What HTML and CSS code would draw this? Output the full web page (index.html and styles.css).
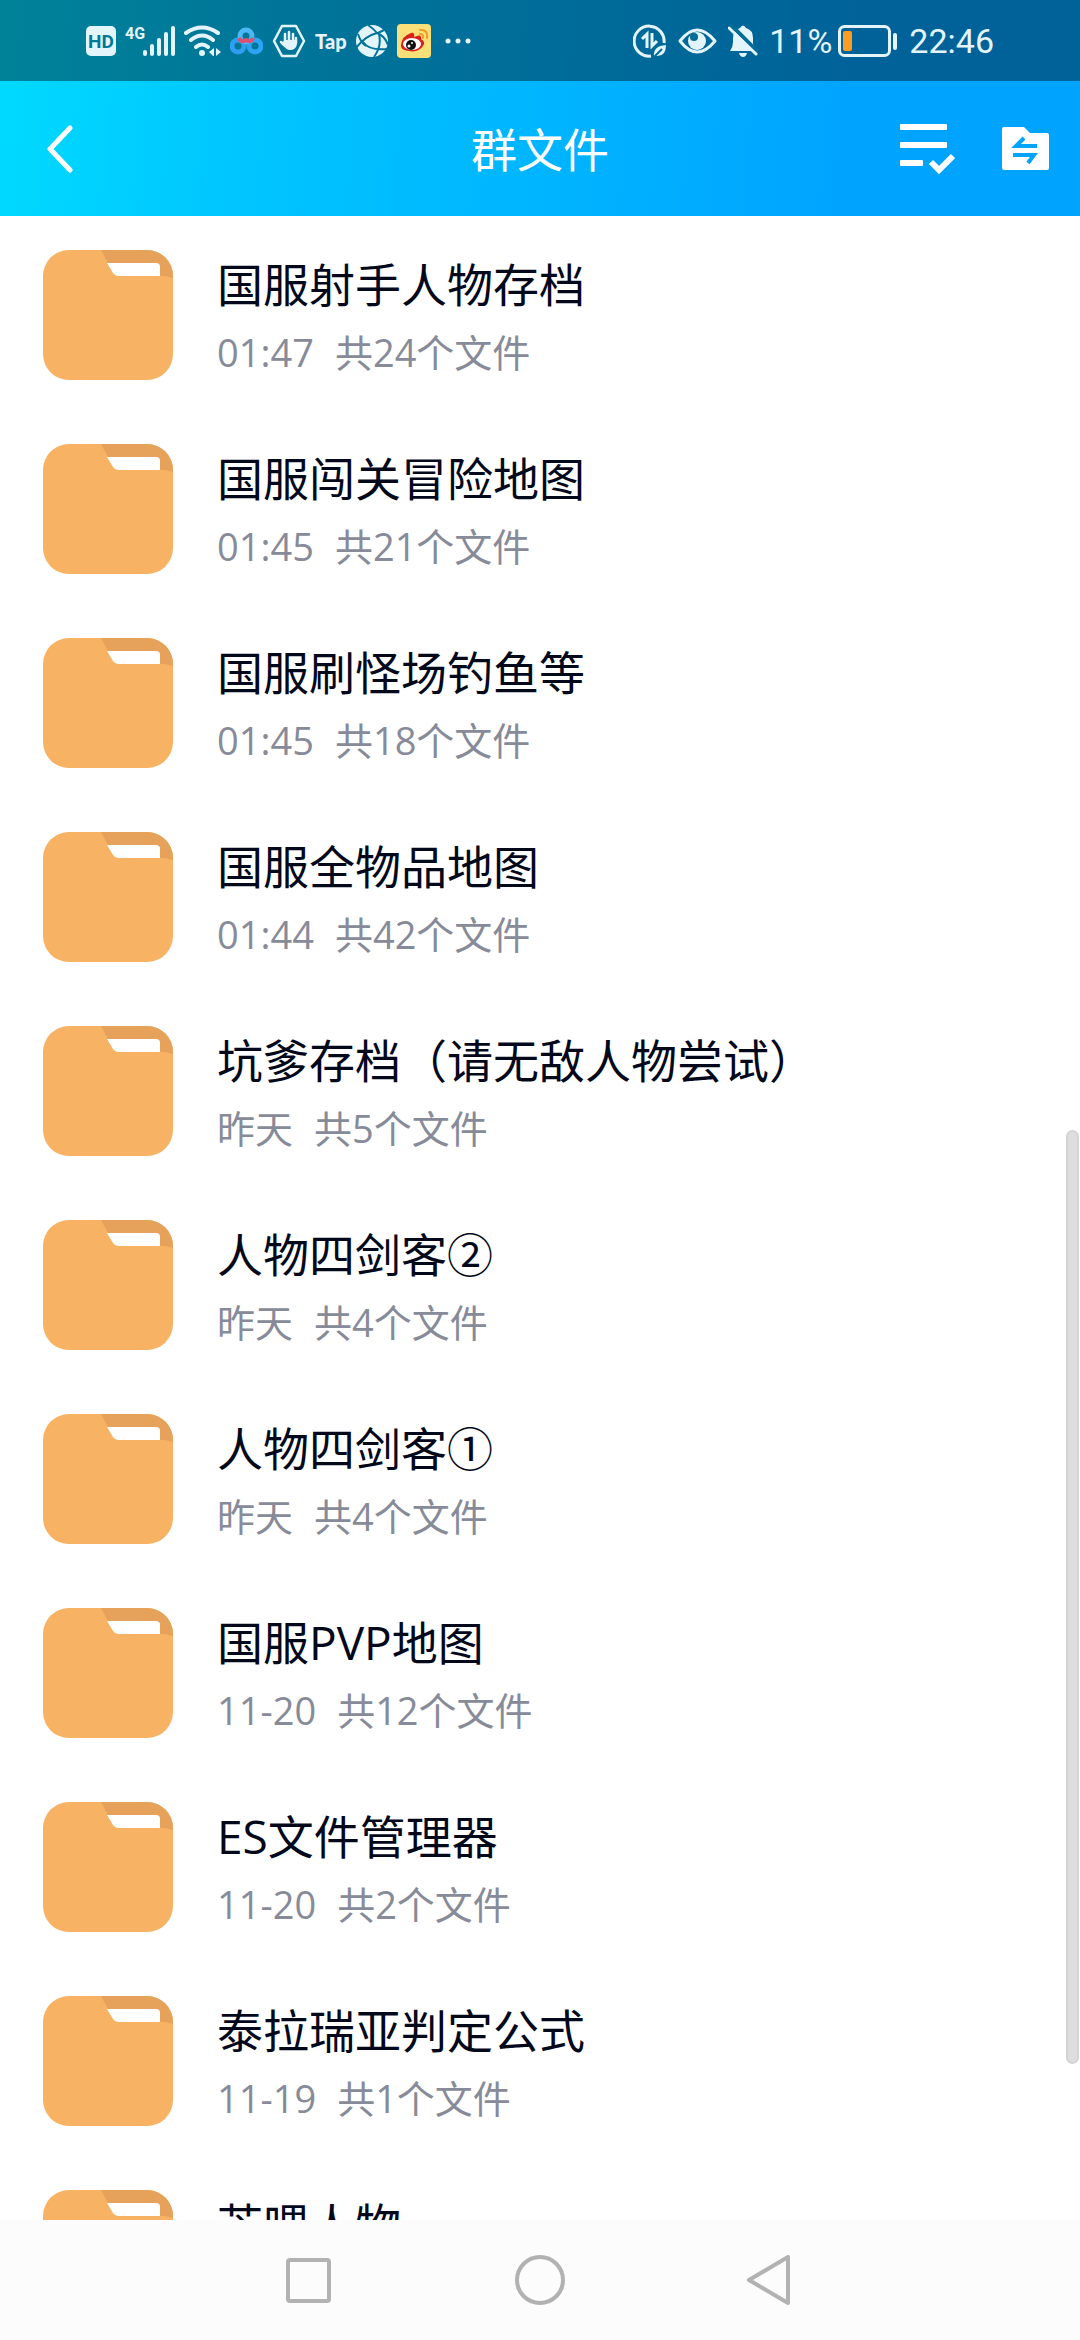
FILE: index.html
```html
<!DOCTYPE html>
<html lang="zh-CN">
<head>
<meta charset="utf-8">
<meta name="viewport" content="width=device-width, initial-scale=1">
<title>群文件</title>
<link rel="stylesheet" href="styles.css">
</head>
<body>
<svg class="defs" width="0" height="0" aria-hidden="true">
  <symbol id="folder" viewBox="0 0 130 130">
    <rect width="130" height="130" rx="26" fill="#f7b264"/>
    <path d="M58 0H104A26 26 0 0 1 130 26V28L122 26H76L65 13Z" fill="#e6a25b"/>
    <path d="M64 13H113Q117 13 117 17V26H75Q72 26 70 23Z" fill="#fff"/>
  </symbol>
</svg>

<div class="top">
  <div class="status">
    <div class="status-group">
      <svg width="30" height="30" viewBox="0 0 30 30"><rect width="30" height="30" rx="5" fill="#e3f5fb"/><text class="hd" x="15" y="22" text-anchor="middle">HD</text></svg>
      <svg width="50" height="32" viewBox="0 0 50 32" fill="#e3f5fb"><text class="net" x="0" y="14">4G</text><rect x="18" y="25" width="4" height="6" rx="2"/><rect x="25" y="19" width="4" height="12" rx="2"/><rect x="32" y="13" width="4" height="18" rx="2"/><rect x="39" y="7" width="4" height="24" rx="2"/><rect x="46" y="1" width="4" height="30" rx="2"/></svg>
      <svg width="37" height="32" viewBox="0 0 37 32" fill="none" stroke="#e3f5fb" stroke-width="4" stroke-linecap="round"><path d="M2 8Q18 -3 34 8M7 15Q18 6 29 15M12 22Q18 17 24 22"/><circle cx="18" cy="28" r="3" fill="#e3f5fb" stroke="none"/><path d="M30 23V31H29L25 27ZM32 31V23L37 27Z" fill="#e3f5fb" stroke="none"/></svg>
      <svg width="33" height="28" viewBox="0 0 33 28" fill="none" stroke-width="5"><circle cx="8" cy="19" r="6" stroke="#2e9ff0"/><circle cx="25" cy="19" r="6" stroke="#2ba4f5"/><circle cx="16" cy="9" r="6" stroke="#4bb8f5"/><path d="M9 11Q11 16 16 13Q21 16 23 11" stroke="#df4f70" stroke-width="4"/></svg>
      <svg width="34" height="34" viewBox="0 0 34 34"><path d="M10 2H24L32 17L24 32H10L2 17Z" fill="none" stroke="#e3f5fb" stroke-width="2.500" stroke-linejoin="round"/><path d="M13 17V10M17 17V8M21 17V10M24 19V14M12 21L9 18" stroke="#e3f5fb" stroke-width="2.500" stroke-linecap="round"/><path d="M12 16H25V20Q24 26 18 26Q14 26 10 20Z" fill="#e3f5fb"/></svg>
      <span class="tap">Tap</span>
      <svg width="32" height="34" viewBox="0 0 32 34"><circle cx="16" cy="17" r="16" fill="#e3f5fb"/><path d="M12 1Q18 5 21 9Q29 12 32 21M21 9Q9 12 0 24M7 18Q13 27 32 25M23 10Q26 22 18 33M2 10Q5 19 10 22M22 9L28 6" fill="none" stroke="#007498" stroke-width="2"/></svg>
      <svg width="34" height="34" viewBox="0 0 34 34"><rect width="34" height="34" rx="4" fill="#fbdf78"/><path d="M4 21Q5 12 14 9Q18 8 17 13Q25 9 24 15Q29 18 26 22Q21 29 12 27Q3 26 4 21Z" fill="#d9201d"/><ellipse cx="15" cy="20" rx="9" ry="6" fill="#fff"/><circle cx="14" cy="21" r="5" fill="#111"/><circle cx="12" cy="22" r="1.500" fill="#fff"/><circle cx="15" cy="19" r="1" fill="#fff"/><path d="M23 6Q31 5 30 14M23 10Q27 10 26 14" fill="none" stroke="#f29b27" stroke-width="2" stroke-linecap="round"/></svg>
      <svg width="34" height="6" viewBox="0 0 34 6" fill="#e3f5fb"><circle cx="8" cy="3" r="2.500"/><circle cx="18" cy="3" r="2.500"/><circle cx="28" cy="3" r="2.500"/></svg>
    </div>
    <div class="status-group status-right">
      <svg width="34" height="34" viewBox="0 0 34 34" fill="none" stroke="#e3f5fb"><path d="M18 32A15 15 0 1 1 31 19" stroke-width="3"/><path d="M14 24V10L9 15M19 9V22L24 17" stroke-width="3"/><path d="M21 32Q20 22 33 21Q33 33 23 32Z" fill="#e3f5fb" stroke="none"/><path d="M21 33L29 25" stroke="#006c98" stroke-width="2"/></svg>
      <svg width="39" height="26" viewBox="0 0 39 26"><path d="M2 13Q19 -9 37 13Q19 35 2 13Z" fill="none" stroke="#e3f5fb" stroke-width="3" stroke-linejoin="round"/><circle cx="19" cy="13" r="9" fill="#e3f5fb"/><circle cx="16" cy="9" r="4" fill="#006c98"/></svg>
      <svg width="30" height="34" viewBox="0 0 30 34"><path d="M2 27Q5 23 5 18V14Q5 6 12 4Q15 -1 18 4Q25 6 25 14V20L29 27Z" fill="#e3f5fb"/><path d="M11 29H19Q18 33 15 33Q12 33 11 29Z" fill="#e3f5fb"/><path d="M3 1L31 29" stroke="#006c98" stroke-width="4"/><path d="M1 4L28 30" stroke="#e3f5fb" stroke-width="3" stroke-linecap="round"/></svg>
      <div class="battery">
        <span class="status-text">11%</span>
        <svg width="60" height="32" viewBox="0 0 60 32"><rect x="1.500" y="1.500" width="50" height="29" rx="5" fill="none" stroke="#e3f5fb" stroke-width="3"/><rect x="5" y="6" width="9" height="20" rx="2" fill="#fc9d23"/><rect x="55" y="8" width="4" height="17" rx="2" fill="#e3f5fb"/></svg>
      </div>
      <span class="status-text">22:46</span>
    </div>
  </div>
  <header class="bar">
    <button class="icon-btn back" type="button" aria-label="返回"><svg width="26" height="48" viewBox="0 0 26 48"><path d="M23 3L3 24L23 45" fill="none" stroke="#fff" stroke-width="5" stroke-linecap="round" stroke-linejoin="round"/></svg></button>
    <h1 class="bar-title">群文件</h1>
    <div class="bar-actions">
      <button class="icon-btn" type="button" aria-label="多选"><svg width="55" height="50" viewBox="0 0 55 50" fill="#fff"><rect width="47" height="6" rx="1"/><rect y="18" width="47" height="6" rx="1"/><rect y="36" width="23" height="6" rx="1"/><path d="M31 38L39 46L53 32" fill="none" stroke="#fff" stroke-width="6"/></svg></button>
      <button class="icon-btn" type="button" aria-label="传输列表"><svg width="47" height="43" viewBox="0 0 47 43"><path d="M2 0H22L28 6H45Q47 6 47 8V41Q47 43 45 43H2Q0 43 0 41V2Q0 0 2 0Z" fill="#fff"/><path d="M35 19H14L22 11M11 28H32L26 36" fill="none" stroke="#00a4ff" stroke-width="4"/></svg></button>
    </div>
  </header>
</div>

<main class="content">
  <ul class="files">
    <li><a class="row" href="#"><svg class="folder"><use href="#folder"/></svg><div class="info"><span class="name">国服射手人物存档</span><span class="meta"><span>01:47</span><span>共24个文件</span></span></div></a></li>
    <li><a class="row" href="#"><svg class="folder"><use href="#folder"/></svg><div class="info"><span class="name">国服闯关冒险地图</span><span class="meta"><span>01:45</span><span>共21个文件</span></span></div></a></li>
    <li><a class="row" href="#"><svg class="folder"><use href="#folder"/></svg><div class="info"><span class="name">国服刷怪场钓鱼等</span><span class="meta"><span>01:45</span><span>共18个文件</span></span></div></a></li>
    <li><a class="row" href="#"><svg class="folder"><use href="#folder"/></svg><div class="info"><span class="name">国服全物品地图</span><span class="meta"><span>01:44</span><span>共42个文件</span></span></div></a></li>
    <li><a class="row" href="#"><svg class="folder"><use href="#folder"/></svg><div class="info"><span class="name">坑爹存档（请无敌人物尝试）</span><span class="meta"><span>昨天</span><span>共5个文件</span></span></div></a></li>
    <li><a class="row" href="#"><svg class="folder"><use href="#folder"/></svg><div class="info"><span class="name">人物四剑客②</span><span class="meta"><span>昨天</span><span>共4个文件</span></span></div></a></li>
    <li><a class="row" href="#"><svg class="folder"><use href="#folder"/></svg><div class="info"><span class="name">人物四剑客①</span><span class="meta"><span>昨天</span><span>共4个文件</span></span></div></a></li>
    <li><a class="row" href="#"><svg class="folder"><use href="#folder"/></svg><div class="info"><span class="name">国服PVP地图</span><span class="meta"><span>11-20</span><span>共12个文件</span></span></div></a></li>
    <li><a class="row" href="#"><svg class="folder"><use href="#folder"/></svg><div class="info"><span class="name">ES文件管理器</span><span class="meta"><span>11-20</span><span>共2个文件</span></span></div></a></li>
    <li><a class="row" href="#"><svg class="folder"><use href="#folder"/></svg><div class="info"><span class="name">泰拉瑞亚判定公式</span><span class="meta"><span>11-19</span><span>共1个文件</span></span></div></a></li>
    <li><a class="row" href="#"><svg class="folder"><use href="#folder"/></svg><div class="info"><span class="name">芒喂人物</span></div></a></li>
  </ul>
  <div class="scrollbar"></div>
</main>

<nav class="nav">
  <button class="icon-btn" type="button" aria-label="最近任务"><svg width="50" height="50" viewBox="0 0 50 50"><rect x="4" y="5" width="41" height="41" rx="2" fill="none" stroke="#b2b2b2" stroke-width="4"/></svg></button>
  <button class="icon-btn" type="button" aria-label="主屏幕"><svg width="50" height="50" viewBox="0 0 50 50"><circle cx="25" cy="25" r="23" fill="none" stroke="#b2b2b2" stroke-width="4"/></svg></button>
  <button class="icon-btn" type="button" aria-label="返回上一级"><svg width="50" height="50" viewBox="0 0 50 50"><path d="M42 2V48L3 25Z" fill="none" stroke="#b2b2b2" stroke-width="4" stroke-linejoin="round"/></svg></button>
</nav>
</body>
</html>
```
FILE: styles.css
```css
* { box-sizing: border-box; }

body {
  margin: 0;
  height: 100vh;
  display: flex;
  flex-direction: column;
  background: #fff;
  color: #03081a;
  font-family: "Open Sans", "Noto Sans CJK SC", sans-serif;
  overflow: hidden;
}

svg { display: block; flex: none; }
.defs { position: absolute; }

.icon-btn {
  padding: 0;
  border: 0;
  background: none;
  cursor: pointer;
}

/* Status bar and title bar share one gradient */
.top {
  flex: none;
  background: linear-gradient(95deg, #00daff 0%, #00c4ff 25%, #00a4ff 78%);
  color: #fff;
}

.status {
  display: flex;
  justify-content: space-between;
  align-items: center;
  height: 81px;
  padding: 0 86px;
  background: rgba(0, 0, 0, 0.4);
  color: #e3f5fb;
}

.status-group {
  display: flex;
  align-items: center;
  gap: 9px;
}

.status-right { gap: 11px; }

.battery {
  display: flex;
  align-items: center;
  gap: 6px;
}

.status-text {
  font: 34px/40px Roboto, sans-serif;
}

.tap {
  font: 900 20px/28px Lato, sans-serif;
}

.hd {
  font: 700 19px Roboto, sans-serif;
  fill: #007898;
}

.net {
  font: 700 16px Roboto, sans-serif;
}

.bar {
  display: grid;
  grid-template-columns: 1fr auto 1fr;
  align-items: center;
  height: 135px;
  padding: 0 31px;
}

.back {
  justify-self: start;
  padding: 0 16px;
}

.bar-title {
  margin: 0;
  font-size: 46px;
  line-height: 60px;
  font-weight: 400;
}

.bar-actions {
  display: flex;
  align-items: center;
  justify-content: flex-end;
  gap: 47px;
}

.content {
  position: relative;
  flex: 1;
  min-height: 0;
  overflow: hidden;
}

.files {
  margin: 0;
  padding: 2px 0 0;
  list-style: none;
}

.row {
  display: flex;
  gap: 44px;
  padding: 32px 43px;
  color: inherit;
  text-decoration: none;
}

.folder {
  width: 130px;
  height: 130px;
}

.info {
  display: flex;
  flex-direction: column;
  gap: 12px;
  padding-top: 4px;
}

.name {
  font-size: 46px;
  line-height: 60px;
}

.meta {
  display: flex;
  gap: 21px;
  font-size: 38px;
  line-height: 52px;
  color: #878b99;
}

.scrollbar {
  position: absolute;
  top: 45.6%;
  right: 1px;
  width: 13px;
  height: 46.6%;
  border: 2px solid #d4d4d4;
  border-radius: 7px;
  background: #dedede;
}

.nav {
  flex: none;
  display: flex;
  justify-content: center;
  align-items: center;
  gap: 181px;
  height: 120px;
  background: #fcfcfc;
}
```
